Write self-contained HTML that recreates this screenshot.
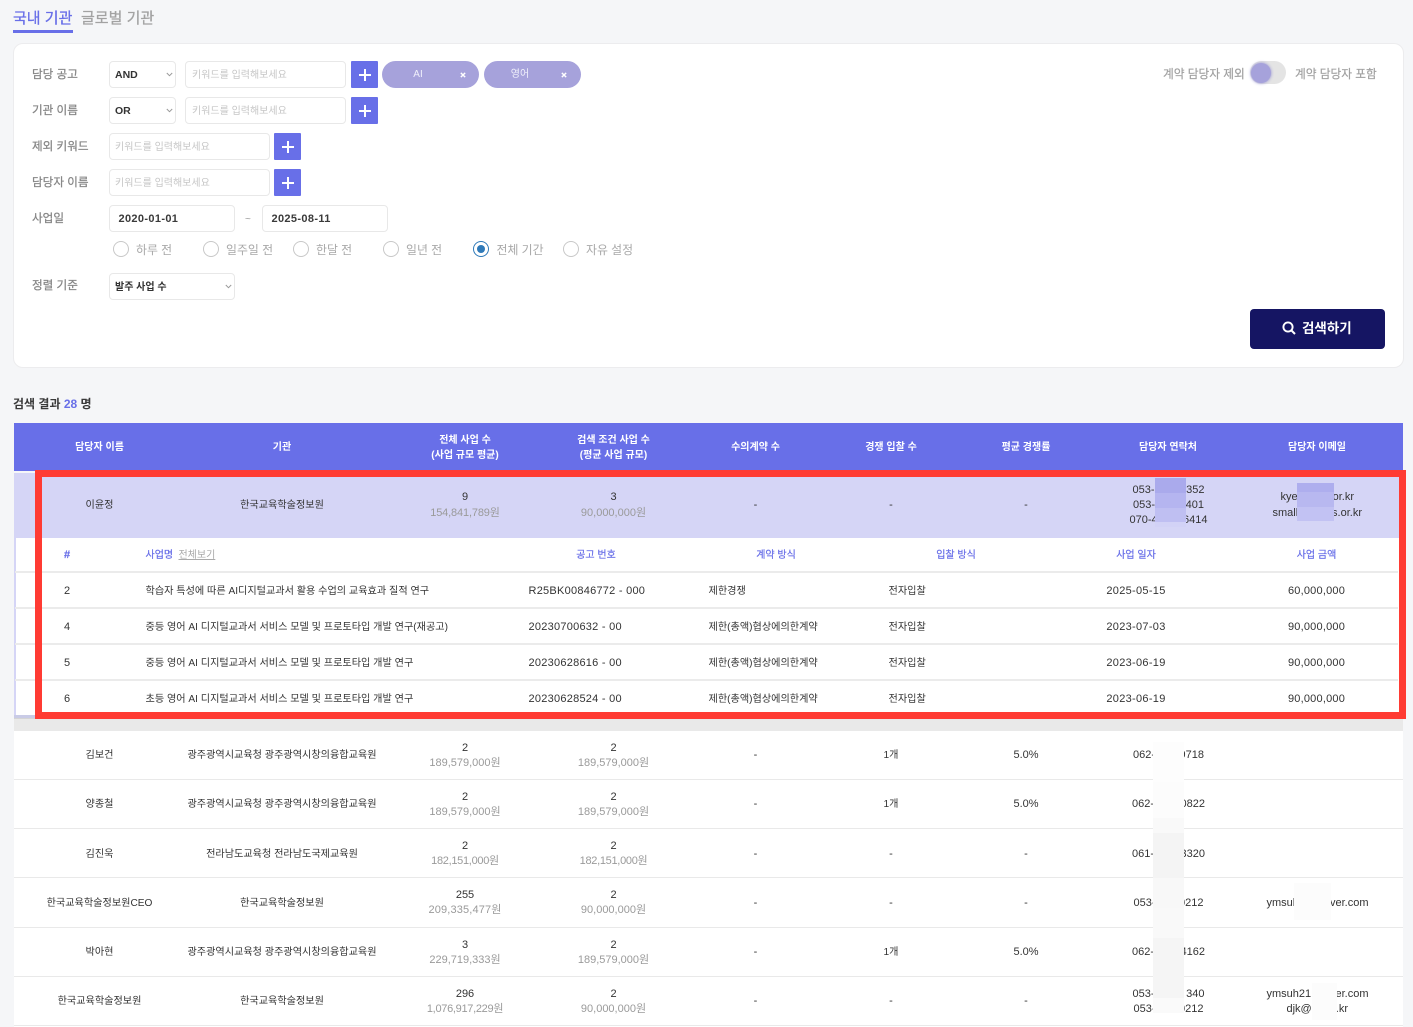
<!DOCTYPE html>
<html lang="ko">
<head>
<meta charset="utf-8">
<title>기관 검색</title>
<style>
html,body{margin:0;padding:0}
body{position:relative;width:1413px;height:1027px;overflow:hidden;background:#f5f6f8;font-family:"Liberation Sans","Noto Sans CJK KR",sans-serif;color:#333;font-size:10.15px}
div,span,svg{position:absolute;box-sizing:border-box}
.c,.l,.r{white-space:nowrap;line-height:16px;height:16px;margin-top:-6px}
.c{transform:translateX(-50%)}
.r{transform:translateX(-100%)}
.lb{font-size:11.6px;color:#868686;margin-top:-7px;-webkit-text-stroke:.25px #868686}
.inp{background:#fff;border:1px solid #e8e8e8;border-radius:4px;height:27px}
.ph{color:#c6c6c6;font-size:10px;margin-top:-7px}
.pl{width:27px;height:27px;background:#686fe8;border-radius:1px}
.pl:before{content:"";position:absolute;left:7.5px;top:12.5px;width:12px;height:2px;background:#fff}
.pl:after{content:"";position:absolute;left:12.5px;top:7.5px;width:2px;height:12px;background:#fff}
.chip{top:61px;width:97px;height:27px;background:#a6a2db;border-radius:14px}
.rd{top:241px;width:16px;height:16px;border-radius:50%;border:1px solid #c8c8c8;background:#fff}
.rl{font-size:11.9px;color:#a8a8a8;margin-top:-7px}
.th{color:#fff;font-weight:700;font-size:10px}
.sh{color:#686fe8;font-size:10px;-webkit-text-stroke:.2px #686fe8}
.g{color:#9a9a9a}
.hl{left:14px;width:1389px;height:1px;background:#e9e9e9}
.sep{left:15px;width:1383px;height:2px;background:#ebebeb}
.num{font-size:11px;margin-top:-7px}
.dt{letter-spacing:.3px}
.am{letter-spacing:.2px}
.cd{letter-spacing:.25px}
.top{font-size:11.7px;color:#a0a0a0;margin-top:-7px;-webkit-text-stroke:.2px #a0a0a0}
</style>
</head>
<body>

<span class="l" style="left:13px;top:17px;font-size:15px;color:#686fe8;-webkit-text-stroke:.3px #686fe8">국내 기관</span>
<div style="left:13px;top:30px;width:60px;height:3px;background:#686fe8"></div>
<span class="l" style="left:81px;top:17px;font-size:15px;color:#a3a3a3;-webkit-text-stroke:.3px #a3a3a3">글로벌 기관</span>

<div style="left:13px;top:43px;width:1391px;height:325px;background:#fff;border:1px solid #ececee;border-radius:10px"></div>

<span class="l lb" style="left:32px;top:74px">담당 공고</span>
<span class="l lb" style="left:32px;top:110px">기관 이름</span>
<span class="l lb" style="left:32px;top:146px">제외 키워드</span>
<span class="l lb" style="left:32px;top:182px">담당자 이름</span>
<span class="l lb" style="left:32px;top:218px">사업일</span>
<span class="l lb" style="left:32px;top:285px">정렬 기준</span>

<div class="inp" style="left:109px;top:61px;width:67px"></div>
<span class="l" style="left:115px;top:74.5px;margin-top:-8px;font-size:10.5px;font-weight:700;color:#333">AND</span>
<svg style="left:166px;top:72px" width="7" height="5" viewBox="0 0 7 5"><path d="M.8 1l2.7 2.7L6.2 1" fill="none" stroke="#999" stroke-width="1"/></svg>
<div class="inp" style="left:185px;top:61px;width:161px"></div>
<span class="l ph" style="left:192px;top:74.5px">키워드를 입력해보세요</span>
<div class="pl" style="left:351px;top:61px"></div>

<div class="chip" style="left:382px"></div>
<span class="c" style="left:418px;top:73px;color:#f0f0fb;font-size:10px">AI</span>
<svg style="left:459.5px;top:71.5px" width="6" height="6" viewBox="0 0 5 5"><path d="M.7.7l3.6 3.6M4.3.7L.7 4.3" stroke="#fff" stroke-width="1.2"/></svg>
<div class="chip" style="left:484px"></div>
<span class="c" style="left:520px;top:73px;color:#f0f0fb;font-size:10px">영어</span>
<svg style="left:560.5px;top:71.5px" width="6" height="6" viewBox="0 0 5 5"><path d="M.7.7l3.6 3.6M4.3.7L.7 4.3" stroke="#fff" stroke-width="1.2"/></svg>

<div class="inp" style="left:109px;top:97px;width:67px"></div>
<span class="l" style="left:115px;top:110.5px;margin-top:-8px;font-size:10.5px;font-weight:700;color:#333">OR</span>
<svg style="left:166px;top:108px" width="7" height="5" viewBox="0 0 7 5"><path d="M.8 1l2.7 2.7L6.2 1" fill="none" stroke="#999" stroke-width="1"/></svg>
<div class="inp" style="left:185px;top:97px;width:161px"></div>
<span class="l ph" style="left:192px;top:110.5px">키워드를 입력해보세요</span>
<div class="pl" style="left:351px;top:97px"></div>

<div class="inp" style="left:109px;top:133px;width:161px"></div>
<span class="l ph" style="left:115px;top:146.5px">키워드를 입력해보세요</span>
<div class="pl" style="left:274px;top:133px"></div>

<div class="inp" style="left:109px;top:169px;width:161px"></div>
<span class="l ph" style="left:115px;top:182.5px">키워드를 입력해보세요</span>
<div class="pl" style="left:274px;top:169px"></div>

<div class="inp" style="left:109px;top:205px;width:126px"></div>
<span class="l" style="left:118.5px;top:218.5px;margin-top:-8px;font-size:11px;font-weight:700;color:#3a3a3a;letter-spacing:.35px">2020-01-01</span>
<span class="l g" style="left:245px;top:218px;font-size:10px">~</span>
<div class="inp" style="left:262px;top:205px;width:126px"></div>
<span class="l" style="left:271.5px;top:218.5px;margin-top:-8px;font-size:11px;font-weight:700;color:#3a3a3a;letter-spacing:.35px">2025-08-11</span>

<div class="rd" style="left:113px"></div><span class="l rl" style="left:136px;top:249px">하루 전</span>
<div class="rd" style="left:203px"></div><span class="l rl" style="left:226px;top:249px">일주일 전</span>
<div class="rd" style="left:293px"></div><span class="l rl" style="left:316px;top:249px">한달 전</span>
<div class="rd" style="left:383px"></div><span class="l rl" style="left:406px;top:249px">일년 전</span>
<div class="rd" style="left:473px;border:1.5px solid #2f7ab9"></div>
<div style="left:477px;top:245px;width:8px;height:8px;border-radius:50%;background:#2f7ab9"></div>
<span class="l rl" style="left:496.5px;top:249px">전체 기간</span>
<div class="rd" style="left:563px"></div><span class="l rl" style="left:586px;top:249px">자유 설정</span>

<div class="inp" style="left:109px;top:273px;width:126px"></div>
<span class="l" style="left:115px;top:285.5px;font-size:10px;font-weight:700;color:#333">발주 사업 수</span>
<svg style="left:225px;top:284px" width="7" height="5" viewBox="0 0 7 5"><path d="M.8 1l2.7 2.7L6.2 1" fill="none" stroke="#999" stroke-width="1"/></svg>

<span class="l top" style="left:1163px;top:74px">계약 담당자 제외</span>
<div style="left:1250px;top:61px;width:36px;height:23px;border-radius:12px;background:#e4e4e4"></div>
<div style="left:1251px;top:63px;width:20px;height:20px;border-radius:50%;background:#a6a2db;box-shadow:0 0 3px #8f8bd0"></div>
<span class="l top" style="left:1295px;top:74px">계약 담당자 포함</span>

<div style="left:1250px;top:309px;width:135px;height:40px;background:#151563;border-radius:4px"></div>
<svg style="left:1282px;top:321px" width="14" height="14" viewBox="0 0 14 14"><circle cx="6" cy="6" r="4.6" fill="none" stroke="#fff" stroke-width="1.9"/><path d="M9.5 9.5L13 13" stroke="#fff" stroke-width="2"/></svg>
<span class="l" style="left:1302px;top:327px;font-size:13.5px;font-weight:700;color:#fff">검색하기</span>

<span class="l" style="left:13px;top:403px;margin-top:-7px;font-size:12px;font-weight:700;color:#3a3a3a">검색 결과 <b style="color:#686fe8">28</b> 명</span>

<!-- table -->
<div style="left:14px;top:423px;width:1389px;height:48px;background:#686fe8"></div>
<span class="c th" style="left:99.5px;top:446px">담당자 이름</span>
<span class="c th" style="left:282px;top:446px">기관</span>
<span class="c th" style="left:465px;top:439px">전체 사업 수</span>
<span class="c th" style="left:465px;top:454px">(사업 규모 평균)</span>
<span class="c th" style="left:613.5px;top:439px">검색 조건 사업 수</span>
<span class="c th" style="left:613.5px;top:454px">(평균 사업 규모)</span>
<span class="c th" style="left:755.5px;top:446px">수의계약 수</span>
<span class="c th" style="left:891px;top:446px">경쟁 입찰 수</span>
<span class="c th" style="left:1026px;top:446px">평균 경쟁률</span>
<span class="c th" style="left:1168px;top:446px">담당자 연락처</span>
<span class="c th" style="left:1317px;top:446px">담당자 이메일</span>

<div style="left:14px;top:473px;width:1385px;height:65px;background:#d5d5f6"></div>
<div style="left:14px;top:538px;width:1385px;height:180px;background:#fff"></div>
<div style="left:14px;top:538px;width:2px;height:180px;background:#d5d5f6"></div>
<div style="left:14px;top:715px;width:1385px;height:3px;background:#c9cbe6"></div>
<div style="left:14px;top:718px;width:1389px;height:13px;background:#e9e9e9"></div>
<div style="left:14px;top:718px;width:1389px;height:1px;background:#d4d4d4"></div>
<div style="left:14px;top:731px;width:1389px;height:296px;background:#fff"></div>

<span class="c" style="left:99.5px;top:504px">이윤정</span>
<span class="c" style="left:282px;top:504px">한국교육학술정보원</span>
<span class="c num" style="left:465px;top:496px">9</span>
<span class="c num g" style="left:465px;top:512px;letter-spacing:-.15px">154,841,789원</span>
<span class="c num" style="left:613.5px;top:496px">3</span>
<span class="c num g" style="left:613.5px;top:512px">90,000,000원</span>
<span class="c num" style="left:755.5px;top:504px">-</span>
<span class="c num" style="left:891px;top:504px">-</span>
<span class="c num" style="left:1026px;top:504px">-</span>
<span class="l num" style="left:1132.5px;top:489px">053-</span><span class="r num" style="left:1204.5px;top:489px">352</span>
<span class="l num" style="left:1133px;top:504px">053-</span><span class="r num" style="left:1204px;top:504px">401</span>
<span class="l num" style="left:1129.5px;top:519px">070-4</span><span class="r num" style="left:1207.5px;top:519px">6414</span>
<span class="l num" style="left:1280.5px;top:496px">kye</span><span class="r num" style="left:1354px;top:496px">or.kr</span>
<span class="l num" style="left:1272.5px;top:512px">small</span><span class="r num" style="left:1362px;top:512px">s.or.kr</span>
<div style="left:1155px;top:478px;width:31px;height:15px;background:#aaaaec"></div>
<div style="left:1155px;top:493px;width:31px;height:15px;background:#b5b5f0"></div>
<div style="left:1155px;top:508px;width:31px;height:14px;background:#bfbff2"></div>
<div style="left:1155px;top:522px;width:31px;height:5px;background:#d2d2f6"></div>
<div style="left:1297px;top:483px;width:37px;height:9px;background:#aeaeee"></div>
<div style="left:1297px;top:492px;width:37px;height:15px;background:#b8b8f0"></div>
<div style="left:1297px;top:507px;width:37px;height:14px;background:#c2c2f3"></div>

<!-- sub table -->
<span class="c sh" style="left:67px;top:554px;font-size:11px;font-weight:700;margin-top:-7px">#</span>
<span class="l sh" style="left:145.5px;top:554px">사업명</span>
<span class="l" style="left:178.5px;top:554px;font-size:10px;color:#aaa;text-decoration:underline">전체보기</span>
<span class="c sh" style="left:596px;top:554px">공고 번호</span>
<span class="c sh" style="left:776px;top:554px">계약 방식</span>
<span class="c sh" style="left:956px;top:554px">입찰 방식</span>
<span class="c sh" style="left:1136px;top:554px">사업 일자</span>
<span class="c sh" style="left:1316.5px;top:554px">사업 금액</span>
<div class="sep" style="top:571px"></div>
<div class="sep" style="top:607px"></div>
<div class="sep" style="top:643px"></div>
<div class="sep" style="top:679px"></div>

<span class="c num" style="left:67px;top:590px">2</span>
<span class="l" style="left:145.5px;top:590px">학습자 특성에 따른 AI디지털교과서 활용 수업의 교육효과 질적 연구</span>
<span class="l num cd" style="left:528.5px;top:590px">R25BK00846772 - 000</span>
<span class="l" style="left:708.5px;top:590px">제한경쟁</span>
<span class="l" style="left:888.5px;top:590px">전자입찰</span>
<span class="c num dt" style="left:1136px;top:590px">2025-05-15</span>
<span class="c num am" style="left:1316.5px;top:590px">60,000,000</span>

<span class="c num" style="left:67px;top:626px">4</span>
<span class="l" style="left:145.5px;top:626px">중등 영어 AI 디지털교과서 서비스 모델 및 프로토타입 개발 연구(재공고)</span>
<span class="l num cd" style="left:528.5px;top:626px">20230700632 - 00</span>
<span class="l" style="left:708.5px;top:626px">제한(총액)협상에의한계약</span>
<span class="l" style="left:888.5px;top:626px">전자입찰</span>
<span class="c num dt" style="left:1136px;top:626px">2023-07-03</span>
<span class="c num am" style="left:1316.5px;top:626px">90,000,000</span>

<span class="c num" style="left:67px;top:662px">5</span>
<span class="l" style="left:145.5px;top:662px">중등 영어 AI 디지털교과서 서비스 모델 및 프로토타입 개발 연구</span>
<span class="l num cd" style="left:528.5px;top:662px">20230628616 - 00</span>
<span class="l" style="left:708.5px;top:662px">제한(총액)협상에의한계약</span>
<span class="l" style="left:888.5px;top:662px">전자입찰</span>
<span class="c num dt" style="left:1136px;top:662px">2023-06-19</span>
<span class="c num am" style="left:1316.5px;top:662px">90,000,000</span>

<span class="c num" style="left:67px;top:698px">6</span>
<span class="l" style="left:145.5px;top:698px">초등 영어 AI 디지털교과서 서비스 모델 및 프로토타입 개발 연구</span>
<span class="l num cd" style="left:528.5px;top:698px">20230628524 - 00</span>
<span class="l" style="left:708.5px;top:698px">제한(총액)협상에의한계약</span>
<span class="l" style="left:888.5px;top:698px">전자입찰</span>
<span class="c num dt" style="left:1136px;top:698px">2023-06-19</span>
<span class="c num am" style="left:1316.5px;top:698px">90,000,000</span>

<!-- red box -->
<div style="left:35px;top:470px;width:1371px;height:249px;border:solid #ff3b33;border-width:7px 7px 7px 7px"></div>

<!-- rows -->
<div class="hl" style="top:779px"></div>
<div class="hl" style="top:828px"></div>
<div class="hl" style="top:877px"></div>
<div class="hl" style="top:927px"></div>
<div class="hl" style="top:976px"></div>
<div class="hl" style="top:1025px"></div>

<span class="c" style="left:99.5px;top:754px">김보건</span>
<span class="c" style="left:282px;top:754px">광주광역시교육청 광주광역시창의융합교육원</span>
<span class="c num" style="left:465px;top:747px">2</span>
<span class="c num g" style="left:465px;top:762px">189,579,000원</span>
<span class="c num" style="left:613.5px;top:747px">2</span>
<span class="c num g" style="left:613.5px;top:762px">189,579,000원</span>
<span class="c num" style="left:755.5px;top:754px">-</span>
<span class="c" style="left:891px;top:754px">1개</span>
<span class="c num" style="left:1026px;top:754px">5.0%</span>
<span class="l num" style="left:1133px;top:754px">062-</span><span class="r num" style="left:1204px;top:754px">9718</span>

<span class="c" style="left:99.5px;top:803px">양종철</span>
<span class="c" style="left:282px;top:803px">광주광역시교육청 광주광역시창의융합교육원</span>
<span class="c num" style="left:465px;top:796px">2</span>
<span class="c num g" style="left:465px;top:811px">189,579,000원</span>
<span class="c num" style="left:613.5px;top:796px">2</span>
<span class="c num g" style="left:613.5px;top:811px">189,579,000원</span>
<span class="c num" style="left:755.5px;top:803px">-</span>
<span class="c" style="left:891px;top:803px">1개</span>
<span class="c num" style="left:1026px;top:803px">5.0%</span>
<span class="l num" style="left:1132px;top:803px">062-</span><span class="r num" style="left:1205px;top:803px">0822</span>

<span class="c" style="left:99.5px;top:853px">김진욱</span>
<span class="c" style="left:282px;top:853px">전라남도교육청 전라남도국제교육원</span>
<span class="c num" style="left:465px;top:845px">2</span>
<span class="c num g" style="left:465px;top:860px;letter-spacing:-.3px">182,151,000원</span>
<span class="c num" style="left:613.5px;top:845px">2</span>
<span class="c num g" style="left:613.5px;top:860px;letter-spacing:-.3px">182,151,000원</span>
<span class="c num" style="left:755.5px;top:853px">-</span>
<span class="c num" style="left:891px;top:853px">-</span>
<span class="c num" style="left:1026px;top:853px">-</span>
<span class="l num" style="left:1132px;top:853px">061-</span><span class="r num" style="left:1205px;top:853px">3320</span>

<span class="c" style="left:99.5px;top:902px">한국교육학술정보원CEO</span>
<span class="c" style="left:282px;top:902px">한국교육학술정보원</span>
<span class="c num" style="left:465px;top:894px">255</span>
<span class="c num g" style="left:465px;top:909px;letter-spacing:.15px">209,335,477원</span>
<span class="c num" style="left:613.5px;top:894px">2</span>
<span class="c num g" style="left:613.5px;top:909px">90,000,000원</span>
<span class="c num" style="left:755.5px;top:902px">-</span>
<span class="c num" style="left:891px;top:902px">-</span>
<span class="c num" style="left:1026px;top:902px">-</span>
<span class="l num" style="left:1133.5px;top:902px">053-</span><span class="r num" style="left:1203.5px;top:902px">0212</span>
<span class="l num" style="left:1266.5px;top:902px">ymsuh</span><span class="r num" style="left:1368.5px;top:902px">ver.com</span>

<span class="c" style="left:99.5px;top:951px">박아현</span>
<span class="c" style="left:282px;top:951px">광주광역시교육청 광주광역시창의융합교육원</span>
<span class="c num" style="left:465px;top:944px">3</span>
<span class="c num g" style="left:465px;top:959px">229,719,333원</span>
<span class="c num" style="left:613.5px;top:944px">2</span>
<span class="c num g" style="left:613.5px;top:959px">189,579,000원</span>
<span class="c num" style="left:755.5px;top:951px">-</span>
<span class="c" style="left:891px;top:951px">1개</span>
<span class="c num" style="left:1026px;top:951px">5.0%</span>
<span class="l num" style="left:1132px;top:951px">062-</span><span class="r num" style="left:1205px;top:951px">4162</span>

<span class="c" style="left:99.5px;top:1000px">한국교육학술정보원</span>
<span class="c" style="left:282px;top:1000px">한국교육학술정보원</span>
<span class="c num" style="left:465px;top:993px">296</span>
<span class="c num g" style="left:465px;top:1008px;letter-spacing:-.3px">1,076,917,229원</span>
<span class="c num" style="left:613.5px;top:993px">2</span>
<span class="c num g" style="left:613.5px;top:1008px">90,000,000원</span>
<span class="c num" style="left:755.5px;top:1000px">-</span>
<span class="c num" style="left:891px;top:1000px">-</span>
<span class="c num" style="left:1026px;top:1000px">-</span>
<span class="l num" style="left:1132.5px;top:993px">053-</span><span class="r num" style="left:1204.5px;top:993px">340</span>
<span class="l num" style="left:1133.5px;top:1008px">053-</span><span class="r num" style="left:1203.5px;top:1008px">0212</span>
<span class="l num" style="left:1266.5px;top:993px">ymsuh21</span><span class="r num" style="left:1368.5px;top:993px">er.com</span>
<span class="l num" style="left:1286.5px;top:1008px">djk@</span><span class="r num" style="left:1348px;top:1008px">.kr</span>

<!-- mosaic masks -->
<div style="left:1153px;top:742px;width:31px;height:40px;background:#fdfdfd"></div>
<div style="left:1153px;top:782px;width:31px;height:36px;background:#fcfcfc"></div>
<div style="left:1153px;top:818px;width:31px;height:15px;background:#f9f9f9"></div>
<div style="left:1153px;top:833px;width:31px;height:45px;background:#f4f4f4"></div>
<div style="left:1153px;top:878px;width:31px;height:30px;background:#f8f8f8"></div>
<div style="left:1153px;top:908px;width:31px;height:30px;background:#f9f9f9"></div>
<div style="left:1153px;top:938px;width:31px;height:60px;background:#f5f5f5"></div>
<div style="left:1153px;top:998px;width:31px;height:15px;background:#fafafa"></div>
<div style="left:1294px;top:883px;width:37px;height:37px;background:#fcfcfc"></div>
<div style="left:1312px;top:983px;width:25px;height:37px;background:#fcfcfc"></div>

</body>
</html>
